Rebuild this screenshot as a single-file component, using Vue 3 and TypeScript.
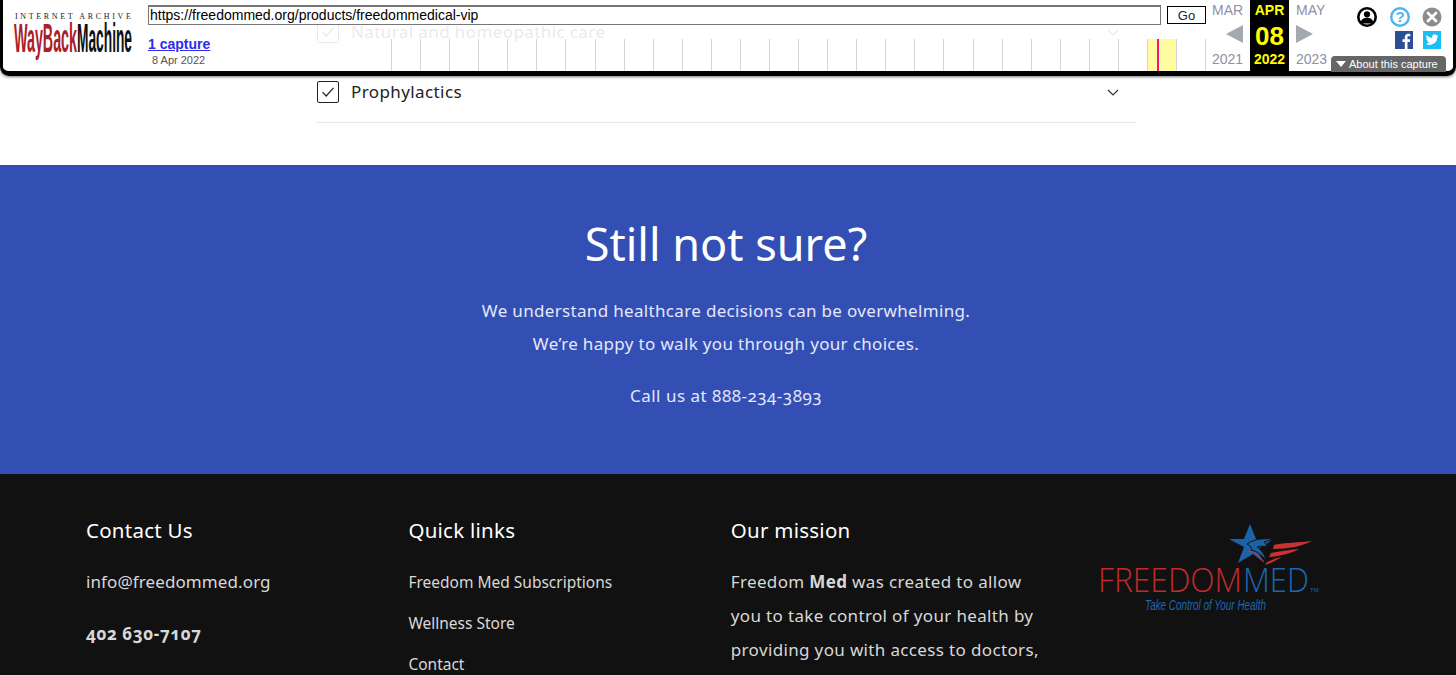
<script setup lang="ts">
const ticks: number[] = Array.from({ length: 28 }, (_, i) => i)
const rows: string[] = ['Natural and homeopathic care', 'Prophylactics']
const links: string[] = ['Freedom Med Subscriptions', 'Wellness Store', 'Contact']
</script>

<template>
  <div class="page">
    <section class="benefits">
      <div v-for="r in rows" :key="r" class="row">
        <span class="check">
          <svg width="14" height="12" viewBox="0 0 14 12"><path d="M1.5 6.2 5.2 10 12.5 1.8" fill="none" stroke="#222" stroke-width="1.2" /></svg>
        </span>
        <span class="row-label">{{ r }}</span>
        <svg class="chev" width="12" height="7" viewBox="0 0 12 7"><path d="M1 1l5 5 5-5" fill="none" stroke="#333" stroke-width="1.2" /></svg>
      </div>
    </section>

    <section class="cta">
      <h2>Still not sure?</h2>
      <p>We understand healthcare decisions can be overwhelming.</p>
      <p>We’re happy to walk you through your choices.</p>
      <p class="call">Call us at 888-234-3893</p>
    </section>

    <footer class="footer">
      <div class="col">
        <h3>Contact Us</h3>
        <p class="mail">info@freedommed.org</p>
        <p class="phone">402 630-7107</p>
      </div>
      <div class="col">
        <h3>Quick links</h3>
        <a v-for="l in links" :key="l" class="flink">{{ l }}</a>
      </div>
      <div class="col mission">
        <h3>Our mission</h3>
        <p>Freedom <b>Med</b> was created to allow you to take control of your health by providing you with access to doctors,</p>
      </div>
      <div class="col logo-col">
        <svg width="226" height="94" viewBox="0 0 226 94">
          <path d="M152 4l6 15 17 0-9 7-7 3 6 13-10-8-15 9 6-16-15-8 15 0z" fill="#1c62a8" />
          <path d="M149 24c7-5 17-6 26-5l-9 3c2 1 3 3 2 5-3-1-7-1-9 0 4 2 8 8 9 14-4-6-9-10-15-11 1-2 0-4-4-6z" fill="#1c62a8" stroke="#111" stroke-width="1" />
          <path d="M150 31c6 1 12 5 16 11" fill="none" stroke="#c8322f" stroke-width="1.2" />
          <path d="M176 25c12-3 24-2 38-4-9 5-24 8-39 8zM173 33c9-2 18-3 28-4-7 4-17 7-30 8zM169 42c5-2 9-4 14-5-4 3-9 6-16 8z" fill="#c8322f" />
          <text x="0" y="72" textLength="144" lengthAdjust="spacingAndGlyphs" class="lg red">FREEDOM</text>
          <text x="145" y="72" textLength="66" lengthAdjust="spacingAndGlyphs" class="lg blue">MED</text>
          <text x="212" y="72" class="tm">TM</text>
          <text x="47" y="90" textLength="121" lengthAdjust="spacingAndGlyphs" class="tag">Take Control of Your Health</text>
        </svg>
      </div>
    </footer>

    <div class="wb">
      <div class="wb-logo">
        <div class="ia">INTERNET ARCHIVE</div>
        <svg width="118" height="38" viewBox="0 0 118 38">
          <text x="0" y="28" textLength="63" lengthAdjust="spacingAndGlyphs" class="wm r">WayBack</text>
          <text x="63" y="28" textLength="55" lengthAdjust="spacingAndGlyphs" class="wm k">Machine</text>
        </svg>
      </div>
      <div class="wb-main">
        <div class="url-row">
          <div class="url">https://freedommed.org/products/freedommedical-vip</div>
          <div class="go">Go</div>
        </div>
        <div class="cap-row">
          <div class="cap">
            <a class="cap-link">1 capture</a>
            <span class="cap-date">8 Apr 2022</span>
          </div>
          <div class="spark">
            <i v-for="t in ticks" :key="t" class="tick" :class="{ hot: t === 26 }"><b v-if="t === 26" class="pin"></b></i>
          </div>
        </div>
      </div>
      <div class="mon side">
        <span>MAR</span>
        <svg class="arr" width="17" height="18" viewBox="0 0 17 18"><path d="M17 0v18L0 9z" fill="#a3a9b0" /></svg>
        <span>2021</span>
      </div>
      <div class="mon cur">
        <span class="c1">APR</span>
        <span class="c2">08</span>
        <span class="c1">2022</span>
      </div>
      <div class="mon side next">
        <span>MAY</span>
        <svg class="arr" width="17" height="18" viewBox="0 0 17 18"><path d="M0 0v18L17 9z" fill="#a3a9b0" /></svg>
        <span>2023</span>
      </div>
      <div class="tools">
        <div class="icons">
          <svg width="22" height="22" viewBox="0 0 22 22" class="i-user">
            <circle cx="11" cy="11" r="8.7" fill="#fff" stroke="#000" stroke-width="2.6" />
            <circle cx="11" cy="8.3" r="3.1" fill="#000" />
            <path d="M4.8 16c1-3.4 3.5-4.2 6.2-4.2s5.200.8 6.200 4.200v1.500H4.800z" fill="#000" />
          </svg>
          <svg width="22" height="22" viewBox="0 0 22 22" class="i-help">
            <circle cx="11" cy="11" r="8.800" fill="#fff" stroke="#4fb3ee" stroke-width="2.400" />
            <text x="11" y="16" text-anchor="middle" class="q">?</text>
          </svg>
          <svg width="20" height="20" viewBox="0 0 20 20" class="i-close">
            <circle cx="10" cy="10" r="9.500" fill="#8c8c8c" />
            <path d="M6 6l8 8M14 6l-8 8" stroke="#fff" stroke-width="2.800" stroke-linecap="round" />
          </svg>
        </div>
        <div class="social">
          <svg width="18" height="18" viewBox="0 0 18 18">
            <rect width="18" height="18" fill="#2c4f93" />
            <path d="M12.500 18v-7h2.300l.4-2.700h-2.700V6.600c0-.8.300-1.300 1.400-1.300h1.400V2.900c-.3 0-1.100-.1-2-.1-2.100 0-3.500 1.200-3.500 3.500v2H7.500V11h2.300v7z" fill="#fff" />
          </svg>
          <svg width="18" height="18" viewBox="0 0 18 18">
            <rect width="18" height="18" fill="#19bff5" />
            <path d="M15.500 4.700c-.5.200-1 .4-1.500.4.500-.3 1-.8 1.200-1.400-.5.300-1.100.5-1.700.6a2.600 2.600 0 0 0-4.500 2.400C6.800 6.600 4.900 5.600 3.600 4c-.7 1.200-.4 2.700.8 3.500-.4 0-.8-.1-1.200-.3 0 1.300.9 2.400 2.100 2.600-.4.100-.8.100-1.200 0 .3 1 1.300 1.800 2.500 1.800A5.300 5.300 0 0 1 2.700 12.700 7.500 7.500 0 0 0 14.200 6c.5-.4 1-.8 1.300-1.300z" fill="#fff" />
          </svg>
        </div>
      </div>
      <div class="about"><i class="tri"></i>About this capture</div>
    </div>
  </div>
</template>

<style>
html, body { margin: 0; background: #fff; overflow: hidden; }
</style>

<style scoped>
.page { position: relative; width: 1456px; height: 676px; overflow: hidden; font-family: "Noto Sans", sans-serif; }
.benefits { height: 162px; padding: 3px 4px 0 0; display: flex; flex-direction: column; align-items: center; }
.row { width: 820px; height: 59px; border-bottom: 1px solid #e8e8e8; display: flex; align-items: center; box-sizing: content-box; }
.check { width: 20px; height: 20px; border: 1px solid #222; border-radius: 2px; margin: -1px 0 0 1px; display: flex; align-items: center; justify-content: center; }
.row-label { margin: -2px 0 0 12px; font-size: 17px; letter-spacing: .4px; color: #222; flex: 1; }
.chev { margin-right: 17px; }
.cta { height: 309px; padding-right: 4px; background: #334fb4; color: #e4e8f8; text-align: center; overflow: hidden; }
.cta h2 { margin: 47px 0 0; font-size: 45px; line-height: 64px; font-weight: 400; color: #fff; }
.cta p { margin: 0; font-size: 17px; line-height: 33px; letter-spacing: .33px; }
.cta h2 + p { margin-top: 18px; }
.cta .call { margin-top: 19px; font-feature-settings: "onum"; letter-spacing: .5px; }
.footer { height: 201px; background: #111; color: #d8d8d8; display: flex; padding: 0 0 0 86px; overflow: hidden; border-bottom: 1px solid #ddd; }
.col { width: 322.400px; flex: none; padding-top: 41px; }
.col h3 { margin: 0; font-size: 20.500px; line-height: 30px; font-weight: 400; color: #fff; letter-spacing: .25px; }
.mail { margin: 22px 0 0; font-size: 17px; line-height: 30px; letter-spacing: .1px; }
.phone { margin: 22px 0 0; font-size: 17px; line-height: 30px; font-weight: 700; letter-spacing: .55px; font-feature-settings: "onum"; }
.flink { display: block; font-size: 15.500px; line-height: 21px; margin-top: 20px; }
.flink:first-of-type { margin-top: 27px; }
.mission { width: 367px; }
.mission p { margin: 20px 0 0; width: 312px; font-size: 17px; line-height: 34px; letter-spacing: .35px; }
.mission b { color: #d8d8d8; }
.logo-col { width: 226px; padding-top: 46px; }
.lg { font-family: "Open Sans", sans-serif; font-weight: 300; font-size: 33px; }
.red { fill: #c02a2e; }
.blue { fill: #1c66b0; }
.tm { font-size: 6px; fill: #1c66b0; font-family: "Liberation Sans", sans-serif; }
.tag { font-size: 14px; font-style: italic; fill: #1c66b0; font-family: "Liberation Sans", sans-serif; }

.wb { position: absolute; left: 0; top: 0; width: 1456px; height: 76px; box-sizing: border-box; border: solid #000; border-width: 0 3px 5px; border-radius: 0 0 9px 9px; background: rgba(255, 255, 255, .9); box-shadow: 0 1px 3px rgba(0, 0, 0, .55); display: flex; font-family: "Liberation Sans", sans-serif; color: #000; }
.wb-logo { width: 118px; margin-left: 11px; padding-top: 12px; flex: none; }
.ia { font-family: "Liberation Serif", serif; font-size: 8px; letter-spacing: 2.650px; line-height: 9px; white-space: nowrap; color: #222; margin-left: 1px; }
.wb-logo svg { display: block; margin-top: 3px; overflow: visible; }
.wm { font-family: "Liberation Sans", sans-serif; font-weight: 700; font-size: 40px; }
.r { fill: #ab1e2a; }
.k { fill: #111; }
.wb-main { width: 1058px; margin-left: 16px; flex: none; }
.url-row { display: flex; padding-top: 5px; gap: 6px; align-items: flex-start; }
.url { width: 1013px; height: 20px; box-sizing: border-box; border: 1px solid #777; border-top-width: 2px; background: #fff; font-size: 14px; line-height: 17px; padding-left: 1px; white-space: nowrap; }
.go { width: 39px; height: 18px; margin-top: 1px; box-sizing: border-box; border: 1px solid #000; background: #fff; font-size: 13px; line-height: 17px; text-align: center; color: #222; }
.cap-row { display: flex; height: 46px; }
.cap { width: 243px; flex: none; display: flex; flex-direction: column; align-items: flex-start; }
.cap-link { margin-top: 11px; font-size: 14px; line-height: 16px; font-weight: 700; color: #2c2cf0; text-decoration: underline; }
.cap-date { margin: 2px 0 0 4px; font-size: 11px; line-height: 13px; color: #555; }
.spark { display: flex; height: 32px; margin-top: 14px; border-right: 1px solid #d4d4d4; }
.tick { width: 29.090px; box-sizing: border-box; border-left: 1px solid #d4d4d4; display: block; position: relative; }
.tick.hot { background: #fffca0; }
.pin { position: absolute; left: 9px; top: 0; width: 2px; height: 100%; background: #e8187c; }
.mon { display: flex; flex-direction: column; align-items: flex-start; flex: none; font-size: 14px; line-height: 16px; color: #8f8fa8; }
.side { width: 38px; padding: 2px 0 0 6px; box-sizing: content-box; }
.arr { margin: 7px 0 8px 14px; }
.next { padding-left: 7px; width: 34px; }
.next .arr { margin-left: 0; }
.cur { width: 39px; background: #000; color: #ff0; font-weight: 700; align-items: center; }
.c1 { line-height: 16px; margin-top: 2px; }
.c2 { font-size: 26px; line-height: 30px; margin: 3px 0 -2px; }
.tools { flex: 1; display: flex; flex-direction: column; align-items: flex-end; padding-right: 11px; }
.icons { display: flex; align-items: center; margin-top: 6px; }
.i-user { margin-right: 11px; }
.i-help { margin-right: 11px; }
.q { font-family: "Liberation Sans", sans-serif; font-size: 15px; font-weight: 700; fill: #4fb3ee; }
.social { display: flex; gap: 10px; margin-top: 3px; margin-right: 1px; }
.about { position: absolute; right: 7px; bottom: -1px; width: 115px; height: 16px; box-sizing: border-box; background: #666; color: #fff; border-radius: 4px 4px 0 0; font-size: 11px; line-height: 16px; padding-left: 5px; display: flex; align-items: center; white-space: nowrap; }
.tri { width: 0; height: 0; border: solid transparent; border-width: 6px 5px 0; border-top-color: #fff; margin-right: 3px; }
</style>
